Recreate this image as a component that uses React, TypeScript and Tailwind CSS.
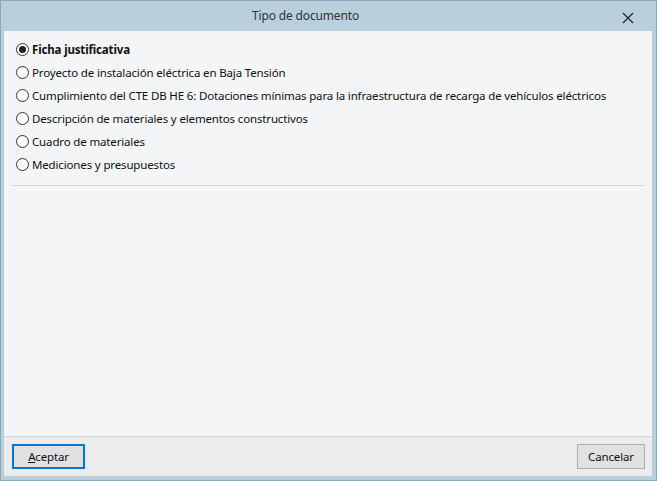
import { useState } from "react";

const options = [
  "Ficha justificativa",
  "Proyecto de instalación eléctrica en Baja Tensión",
  "Cumplimiento del CTE DB HE 6: Dotaciones mínimas para la infraestructura de recarga de vehículos eléctricos",
  "Descripción de materiales y elementos constructivos",
  "Cuadro de materiales",
  "Mediciones y presupuestos",
];

function Radio({ checked }: { checked: boolean }) {
  return (
    <span className="w-[13px] h-[13px] rounded-full border border-[#333] bg-white flex items-center justify-center shrink-0">
      {checked && <span className="w-[7px] h-[7px] rounded-full bg-[#222]" />}
    </span>
  );
}

export default function App() {
  const [selected, setSelected] = useState(0);

  return (
    <div
      className="w-[657px] h-[481px] bg-[#bacfdc] border border-[#8fa6b5] flex flex-col text-[11.5px] tracking-[-0.15px] text-[#111]"
      style={{ fontFamily: '"Noto Sans", "Liberation Sans", sans-serif' }}
    >
      {/* title bar */}
      <div className="h-[30px] shrink-0 flex items-center relative">
        <div className="flex-1 text-center text-[#333] pr-[46px] text-[12px]">Tipo de documento</div>
        <button className="absolute right-[22px] top-[11px] w-[12px] h-[12px]">
          <svg viewBox="0 0 12 12" className="w-[12px] h-[12px]">
            <path d="M1 1 L11 11 M11 1 L1 11" stroke="#222" strokeWidth="1.2" />
          </svg>
        </button>
      </div>

      <div className="flex-1 flex flex-col ml-[3px] mr-[4px] mb-[4px] bg-[#f4f5f7]">
        <div className="flex-1 flex flex-col pt-[7px]">
          {options.map((label, i) => (
            <label
              key={label}
              onClick={() => setSelected(i)}
              className="h-[23px] flex items-center gap-[3px] pl-[12px] cursor-default"
            >
              <Radio checked={selected === i} />
              <span className={selected === i ? "font-bold" : ""}>{label}</span>
            </label>
          ))}
          <div className="mt-[9px] mx-[8px] h-px bg-[#d2d2d2]" />
        </div>

        <div className="h-px bg-[#d6d6d6]" />
        <div className="h-[39px] bg-[#ececee] flex items-start justify-between pt-[7px] pl-[8px] pr-[7px]">
          <button className="w-[73px] h-[25px] bg-[#e1e1e1] border-2 border-[#0078d7] flex items-center justify-center">
            <span>
              <span className="underline">A</span>ceptar
            </span>
          </button>
          <button className="w-[68px] h-[25px] bg-[#e1e1e1] border border-[#adadad] flex items-center justify-center">
            Cancelar
          </button>
        </div>
      </div>
    </div>
  );
}
